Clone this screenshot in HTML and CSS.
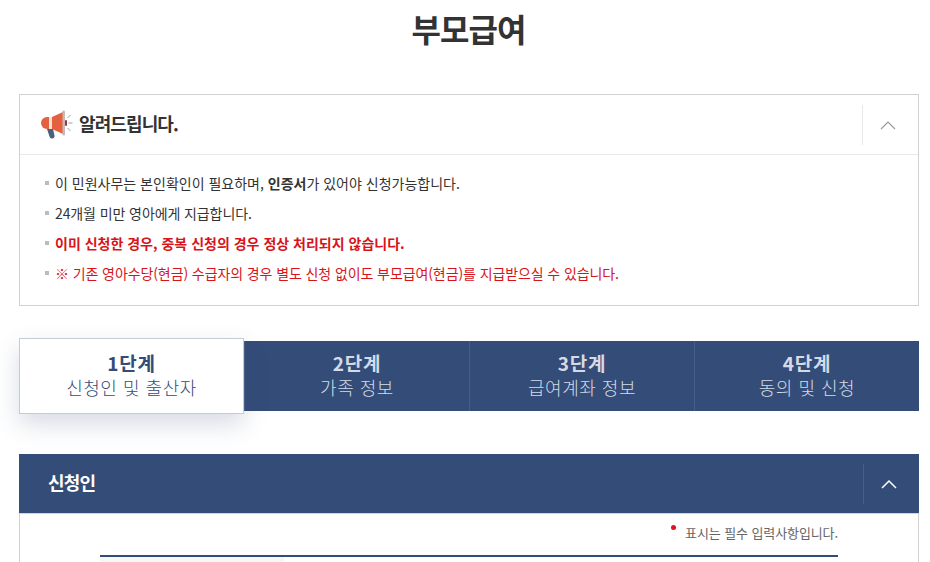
FILE: index.html
```html
<!DOCTYPE html>
<html lang="ko">
<head>
    <meta charset="UTF-8">
    <title>부모급여</title>
    <link rel="stylesheet" href="styles.css">
</head>
<body>
    <h1 class="page-title">부모급여</h1>

    <section class="notice">
        <div class="notice-head">
            <svg class="notice-icon" width="33" height="30" viewBox="0 0 33 30">
                <path d="M7 8h5v12H7a6 6 0 0 1-6-6 6 6 0 0 1 6-6z" fill="#e4603f"/>
                <rect x="9" y="8" width="3" height="12" fill="#f3e3d8"/>
                <path d="M12 8l11-5v22l-11-5z" fill="#e4603f"/>
                <rect x="22.500" y="1.500" width="2.500" height="25" rx="1" fill="#c9b9b4"/>
                <path d="M7 20h6l1.500 6.500a2.500 2.500 0 0 1-5 1z" fill="#4d6077"/>
                <rect x="25" y="11" width="2" height="6" rx="1" fill="#8a3b4a"/>
                <path d="M27.500 9l3-3M28.500 14h4M27.500 19l3 3" stroke="#9aa3ad" stroke-width="1" fill="none"/>
            </svg>
            <h2 class="notice-title">알려드립니다.</h2>
            <button class="toggle"><svg width="16" height="10" viewBox="0 0 16 10"><path d="M1 9l7-7 7 7" fill="none" stroke="#999" stroke-width="1.200"/></svg></button>
        </div>
        <ul class="notice-list">
            <li class="wide">이 민원사무는 본인확인이 필요하며, <b>인증서</b>가 있어야 신청가능합니다.</li>
            <li>24개월 미만 영아에게 지급합니다.</li>
            <li class="warn wide"><b>이미 신청한 경우, 중복 신청의 경우 정상 처리되지 않습니다.</b></li>
            <li class="warn">※ 기존 영아수당(현금) 수급자의 경우 별도 신청 없이도 부모급여(현금)를 지급받으실 수 있습니다.</li>
        </ul>
    </section>

    <ol class="steps">
        <li class="step active"><strong>1단계</strong><span>신청인 및 출산자</span></li>
        <li class="step"><strong>2단계</strong><span>가족 정보</span></li>
        <li class="step"><strong>3단계</strong><span>급여계좌 정보</span></li>
        <li class="step"><strong>4단계</strong><span>동의 및 신청</span></li>
    </ol>

    <section class="panel">
        <div class="panel-head">
            <h2 class="panel-title">신청인</h2>
            <button class="toggle toggle-dark"><svg width="16" height="10" viewBox="0 0 16 10"><path d="M1 9l7-7 7 7" fill="none" stroke="#fff" stroke-width="1.500"/></svg></button>
        </div>
        <div class="panel-body">
            <p class="required"><i class="dot"></i>표시는 필수 입력사항입니다.</p>
            <div class="table-top"><div class="table-th"></div></div>
        </div>
    </section>
</body>
</html>
```

FILE: styles.css
```css
* {
    margin: 0;
    padding: 0;
    box-sizing: border-box;
}
html, body {
    height: 562px;
    overflow: hidden;
}
body {
    background-color: #ffffff;
    color: #333333;
    font-family: "Noto Sans CJK KR", "Noto Sans", sans-serif;
    padding: 0 11px 0 19px;
}
button {
    background: none;
    border: none;
}
/* Title */
.page-title {
    font-size: 32px;
    line-height: 56px;
    height: 94px;
    padding-right: 1px;
    text-align: center;
    color: #333333;
    letter-spacing: -1px;
}
/* Notice */
.notice {
    border: 1px solid #d2d2d2;
    height: 212px;
}
.notice-head {
    display: flex;
    align-items: center;
    height: 60px;
    padding-left: 20px;
    border-bottom: 1px solid #e9e9e9;
}
.notice-icon {
    margin-right: 6px;
    margin-bottom: 2px;
}
.notice-title {
    flex: 1;
    font-size: 18px;
    line-height: 24px;
    padding-bottom: 4px;
    letter-spacing: -0.9px;
}
.toggle {
    display: flex;
    align-items: center;
    justify-content: center;
    width: 56px;
    height: 40px;
    padding-right: 6px;
    border-left: 1px solid #e9e9e9;
}
.notice-list {
    list-style: none;
    padding: 13px 25px;
}
.notice-list li {
    font-size: 14px;
    line-height: 30px;
    letter-spacing: -0.1px;
    padding-left: 10px;
    position: relative;
}
.notice-list li::before {
    content: "";
    position: absolute;
    left: 0;
    top: 13px;
    width: 4px;
    height: 4px;
    background-color: #bbbbbb;
}
.notice-list .wide {
    letter-spacing: 0;
}
.notice-list .warn {
    color: #d7141a;
}
/* Steps */
.steps {
    list-style: none;
    display: flex;
    margin-top: 35px;
    height: 70px;
    background-color: #344c78;
}
.step {
    flex: 1;
    display: flex;
    flex-direction: column;
    align-items: center;
    justify-content: center;
    padding-bottom: 3px;
    color: #d5dbe6;
    border-left: 1px solid #465e8a;
}
.step strong {
    font-size: 19px;
    line-height: 24px;
    letter-spacing: 0.7px;
}
.step span {
    font-size: 18px;
    line-height: 24px;
    font-weight: 300;
    letter-spacing: 0.5px;
}
.step.active {
    flex: none;
    width: 225px;
    height: 76px;
    margin-top: -3px;
    background-color: #ffffff;
    color: #344c78;
    border: 1px solid #c5ccd6;
    box-shadow: 0 10px 25px rgba(52, 76, 120, 0.2);
}
/* Panel */
.panel {
    margin-top: 43px;
}
.panel-head {
    display: flex;
    align-items: center;
    height: 60px;
    padding-left: 29px;
    background-color: #344c78;
    border-bottom: 1px solid #d2d2d2;
}
.panel-title {
    flex: 1;
    font-size: 18px;
    line-height: 24px;
    padding-bottom: 4px;
    color: #ffffff;
    letter-spacing: -0.8px;
}
.toggle-dark {
    border-left-color: #465e8a;
}
.panel-body {
    border: 1px solid #d2d2d2;
    border-top: none;
    padding: 0 80px;
    height: 60px;
}
.required {
    font-size: 13px;
    line-height: 20px;
    padding-top: 9px;
    height: 41px;
    text-align: right;
    color: #666666;
    letter-spacing: -0.1px;
}
.dot {
    display: inline-block;
    width: 5px;
    height: 5px;
    margin-right: 9px;
    border-radius: 50%;
    background-color: #e01020;
    vertical-align: 8px;
}
.table-top {
    border-top: 2px solid #344c78;
}
.table-th {
    width: 184px;
    height: 8px;
    background-color: #f7f7f7;
}
```
